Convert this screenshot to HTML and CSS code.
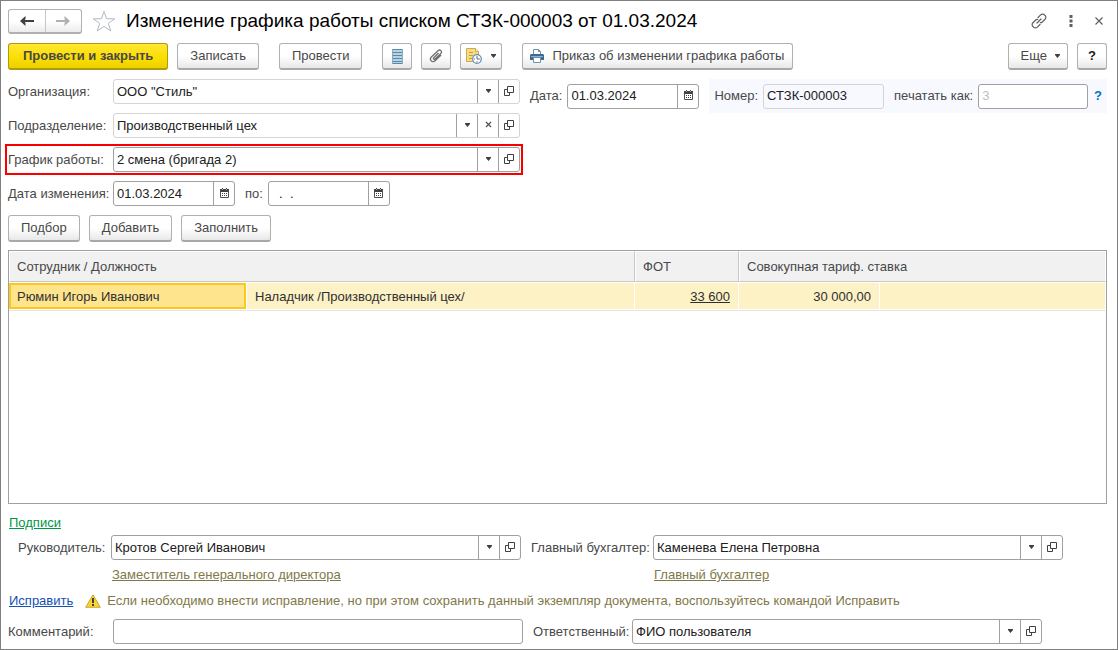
FILE: index.html
```html
<!DOCTYPE html>
<html lang="ru">
<head>
<meta charset="utf-8">
<title>Изменение графика работы списком</title>
<link rel="stylesheet" href="styles.css">
</head>
<body>
<svg class="sprite" aria-hidden="true">
  <symbol id="i-down" viewBox="0 0 7 4"><path d="M1 0h5v1H1zM1 1h5L3.500 4z" fill="#404040"/></symbol>
  <symbol id="i-open" viewBox="0 0 10 10"><path d="M3.500.5h6v6h-6zM3 3.500H.5v6h5V7" fill="none" stroke="#404040"/></symbol>
  <symbol id="i-clear" viewBox="0 0 7 7"><path d="M1 1l5 5M6 1L1 6" fill="none" stroke="#505050" stroke-width="1.200"/></symbol>
  <symbol id="i-cal" viewBox="0 0 9 10"><path d="M0 1h9v3H0zM2 0h1v1H2zM6 0h1v1H6z" fill="#404040"/><path d="M2 1h1v1H2zM6 1h1v1H6z" fill="#b0b0b0"/><path d="M.5 2v7.500h8V2" fill="none" stroke="#505050"/><path d="M2 5h1v1H2zM4 5h1v1H4zM6 5h1v1H6zM2 7h1v1H2zM4 7h1v1H4zM6 7h1v1H6z" fill="#404040"/></symbol>
</svg>
<main class="window">
  <header class="titlebar">
    <div class="nav">
      <button class="nav-btn" type="button" aria-label="Назад"><svg width="14" height="10" viewBox="0 0 14 10"><path d="M3 5h11" stroke="#404040" stroke-width="2"/><path d="M0 5L5.500 0v3L4 5l1.500 2v3z" fill="#404040"/></svg></button>
      <button class="nav-btn" type="button" aria-label="Вперед"><svg width="14" height="10" viewBox="0 0 14 10"><path d="M0 5h11" stroke="#b0b0b0" stroke-width="2"/><path d="M14 5L8.500 0v3L10 5 8.500 7v3z" fill="#b0b0b0"/></svg></button>
    </div>
    <button class="plain" type="button" aria-label="В избранное"><svg width="24" height="22" viewBox="0 0 24 22"><path d="M12 1.500l2.600 7.300h8.200l-6.500 4.700 2.500 7.500-6.800-4.600L5.200 21l2.500-7.500L1.200 8.800h8.200z" fill="#fff" stroke="#b0bac2" stroke-width="1"/></svg></button>
    <h1 class="title">Изменение графика работы списком СТЗК-000003 от 01.03.2024</h1>
    <div class="win-tools">
      <button class="plain" type="button" aria-label="Ссылка"><svg width="16" height="16" viewBox="0 0 16 16"><g fill="none" stroke="#606060" stroke-width="1.200" stroke-linecap="round"><path d="M7 4.500l2.700-2.700a2.600 2.600 0 0 1 3.700 0l.7.7a2.600 2.600 0 0 1 0 3.700l-2.800 2.800a2.600 2.600 0 0 1-2 .7"/><path d="M9 11.500l-2.700 2.700a2.600 2.600 0 0 1-3.700 0l-.7-.7a2.600 2.600 0 0 1 0-3.700l2.800-2.800a2.600 2.600 0 0 1 2-.7"/><path d="M6 10l4-4"/></g></svg></button>
      <button class="plain" type="button" aria-label="Меню"><svg width="4" height="12" viewBox="0 0 4 12"><path d="M.5 0h3v3h-3zM.5 4.500h3v3h-3zM.5 9h3v3h-3z" fill="#606060"/></svg></button>
      <button class="plain" type="button" aria-label="Закрыть"><svg width="8" height="8" viewBox="0 0 8 8"><path d="M.5.5l7 7M7.500.5l-7 7" stroke="#606060" stroke-width="1.200"/></svg></button>
    </div>
  </header>

  <div class="toolbar">
    <button class="btn btn-main" type="button">Провести и закрыть</button>
    <button class="btn" type="button">Записать</button>
    <button class="btn gap-before" type="button">Провести</button>
    <button class="btn btn-icon gap-before" type="button" aria-label="Список"><svg width="11" height="15" viewBox="0 0 11 15"><path d="M0 0h11v15H0z" fill="#b5d2e6"/><path d="M0 .5h11M0 3.500h11M0 6.500h11M0 9.500h11M0 12.500h11M0 14.500h11" stroke="#5d87a3"/><path d="M.5 0v15M10.500 0v15" stroke="#86abc4"/></svg></button>
    <button class="btn btn-icon" type="button" aria-label="Файлы"><svg width="14" height="14" viewBox="0 0 14 14"><path d="M9.500 4L4.800 8.700c-1 1 .3 2.300 1.300 1.300l5.700-5.500c2-2-.8-4.700-2.800-2.800L2.400 8c-2.600 2.600 1 6.400 3.700 3.800l6-5.800" fill="none" stroke="#707070" stroke-width="1.300"/></svg></button>
    <button class="btn btn-drop" type="button" aria-label="Создать на основании"><svg width="16" height="16" viewBox="0 0 16 16"><path d="M.5.5h9l3 3v10H.5z" fill="#f6dc83" stroke="#d2aa4a"/><path d="M9.500.5v3h3" fill="#fff3c8" stroke="#d2aa4a"/><path d="M3 4.500h4M3 7.500h4M3 10.500h3" stroke="#c79e45"/><circle cx="11" cy="11" r="4.300" fill="#fff" stroke="#5e8fba" stroke-width="1.200"/><path d="M11 8v3h2" fill="none" stroke="#3c6f9e"/><path d="M8 10.500h1v1H8zM13.200 10.500h1v1h-1zM10.500 13.200h1v1h-1z" fill="#d4453c"/></svg><svg width="7" height="4"><use href="#i-down"/></svg></button>
    <button class="btn btn-print" type="button"><svg width="14" height="14" viewBox="0 0 14 14"><path d="M3.500 5V.5h5l2 2V5" fill="#fff" stroke="#6f8faa"/><path d="M8.500.5v2h2" fill="none" stroke="#6f8faa"/><path d="M1 5h12l1 1v5H0V6z" fill="#3d6a92"/><path d="M1 7h12v1H1z" fill="#8db2d0"/><path d="M3.500 8.500h7v5h-7z" fill="#fff" stroke="#6f8faa"/></svg>Приказ об изменении графика работы</button>
    <button class="btn btn-more" type="button">Еще <svg width="7" height="4"><use href="#i-down"/></svg></button>
    <button class="btn btn-help" type="button">?</button>
  </div>

  <form class="form">
    <div class="head">
      <div class="col-left">
        <div class="row">
          <label class="label" for="org">Организация:</label>
          <div class="field soft grow"><input id="org" type="text" value='ООО "Стиль"'><button type="button" aria-label="Выбрать"><svg width="7" height="4"><use href="#i-down"/></svg></button><button type="button" aria-label="Открыть"><svg width="10" height="10"><use href="#i-open"/></svg></button></div>
        </div>
        <div class="row">
          <label class="label" for="dep">Подразделение:</label>
          <div class="field soft grow"><input id="dep" type="text" value="Производственный цех"><button type="button" aria-label="Выбрать"><svg width="7" height="4"><use href="#i-down"/></svg></button><button type="button" aria-label="Очистить"><svg width="7" height="7"><use href="#i-clear"/></svg></button><button type="button" aria-label="Открыть"><svg width="10" height="10"><use href="#i-open"/></svg></button></div>
        </div>
        <div class="row marked">
          <label class="label" for="sched">График работы:</label>
          <div class="field grow"><input id="sched" type="text" value="2 смена (бригада 2)"><button type="button" aria-label="Выбрать"><svg width="7" height="4"><use href="#i-down"/></svg></button><button type="button" aria-label="Открыть"><svg width="10" height="10"><use href="#i-open"/></svg></button></div>
        </div>
        <div class="row">
          <label class="label" for="from">Дата изменения:</label>
          <div class="field date"><input id="from" type="text" value="01.03.2024"><button type="button" aria-label="Календарь"><svg width="9" height="10"><use href="#i-cal"/></svg></button></div>
          <label class="label-to" for="to">по:</label>
          <div class="field date"><input id="to" type="text" value="  .  ."><button type="button" aria-label="Календарь"><svg width="9" height="10"><use href="#i-cal"/></svg></button></div>
        </div>
      </div>
      <div class="col-right">
        <div class="date-group">
          <label for="date">Дата:</label>
          <div class="field doc-date"><input id="date" type="text" value="01.03.2024"><button type="button" aria-label="Календарь"><svg width="9" height="10"><use href="#i-cal"/></svg></button></div>
        </div>
        <div class="num-group">
          <label for="num">Номер:</label>
          <div class="field soft num tinted"><input id="num" type="text" value="СТЗК-000003" readonly></div>
          <label class="print-label" for="printas">печатать как:</label>
          <div class="field print-as"><input id="printas" type="text" placeholder="3"></div>
          <a class="hint" href="#">?</a>
        </div>
      </div>
    </div>

    <div class="commands">
      <button class="btn" type="button">Подбор</button>
      <button class="btn" type="button">Добавить</button>
      <button class="btn" type="button">Заполнить</button>
    </div>

    <div class="grid-box">
      <table class="grid">
        <colgroup><col class="c-name"><col class="c-job"><col class="c-fot"><col class="c-rate"><col></colgroup>
        <thead><tr><th colspan="2">Сотрудник / Должность</th><th>ФОТ</th><th colspan="2">Совокупная тариф. ставка</th></tr></thead>
        <tbody><tr><td class="current">Рюмин Игорь Иванович</td><td>Наладчик /Производственный цех/</td><td class="num-cell"><a href="#">33 600</a></td><td class="num-cell">30 000,00</td><td></td></tr></tbody>
      </table>
    </div>

    <a class="signs" href="#">Подписи</a>
    <div class="signers">
      <label class="boss-label" for="boss">Руководитель:</label>
      <div class="signer">
        <div class="field"><input id="boss" type="text" value="Кротов Сергей Иванович"><button type="button" aria-label="Выбрать"><svg width="7" height="4"><use href="#i-down"/></svg></button><button type="button" aria-label="Открыть"><svg width="10" height="10"><use href="#i-open"/></svg></button></div>
        <a href="#">Заместитель генерального директора</a>
      </div>
      <label class="acc-label" for="acc">Главный бухгалтер:</label>
      <div class="signer">
        <div class="field"><input id="acc" type="text" value="Каменева Елена Петровна"><button type="button" aria-label="Выбрать"><svg width="7" height="4"><use href="#i-down"/></svg></button><button type="button" aria-label="Открыть"><svg width="10" height="10"><use href="#i-open"/></svg></button></div>
        <a href="#">Главный бухгалтер</a>
      </div>
    </div>

    <div class="fix">
      <a href="#">Исправить</a>
      <svg width="16" height="14" viewBox="0 0 16 14"><path d="M8 .8L15.300 13.300H.7z" fill="#f8d62e" stroke="#c9a63a" stroke-linejoin="round"/><path d="M7 4h2v5H7zM7 10h2v2H7z" fill="#404040"/></svg>
      <span>Если необходимо внести исправление, но при этом сохранить данный экземпляр документа, воспользуйтесь командой Исправить</span>
    </div>

    <div class="row footer">
      <label class="label" for="comment">Комментарий:</label>
      <div class="field comment"><input id="comment" type="text"></div>
      <label class="resp-label" for="resp">Ответственный:</label>
      <div class="field resp"><input id="resp" type="text" value="ФИО пользователя"><button type="button" aria-label="Выбрать"><svg width="7" height="4"><use href="#i-down"/></svg></button><button type="button" aria-label="Открыть"><svg width="10" height="10"><use href="#i-open"/></svg></button></div>
    </div>
  </form>
</main>
</body>
</html>
```
FILE: styles.css
```css
* { box-sizing: border-box; }
body {
  margin: 0;
  background: #fff;
  color: #484848;
  font: 13px/16px "Liberation Sans", Arial, sans-serif;
}
button, input { font: inherit; color: inherit; }
svg { display: block; flex: none; }
.sprite { position: absolute; width: 0; height: 0; }

.window {
  display: flex;
  flex-direction: column;
  min-height: 100vh;
  border: 1px solid #808080;
  padding: 8px 10px 5px 7px;
}

.titlebar { display: flex; align-items: center; height: 24px; }
.nav {
  display: flex;
  width: 74px;
  height: 25px;
  border: 1px solid #b0b0b0;
  border-bottom: 2px solid #b0b0b0;
  border-radius: 3px;
  background: linear-gradient(#fff 50%, #ececec);
}
.nav-btn {
  flex: 1;
  display: flex;
  align-items: center;
  justify-content: center;
  border: 0;
  padding: 0;
  background: none;
}
.nav-btn + .nav-btn { border-left: 1px solid #c8c8c8; }
.plain { border: 0; padding: 0; background: none; }
.titlebar > .plain { margin: 0 10px; }
.title { margin: 0; color: #000; font-size: 19px; line-height: 24px; font-weight: 400; }
.win-tools { display: flex; align-items: center; gap: 22px; margin-left: auto; padding-right: 4px; }

.toolbar { display: flex; gap: 9px; margin-top: 10px; }
.btn {
  display: flex;
  align-items: center;
  justify-content: center;
  height: 27px;
  padding: 0 12px;
  border: 1px solid #b0b0b0;
  border-bottom: 2px solid #a8a8a8;
  border-radius: 3px;
  background: linear-gradient(#fff 50%, #e8e8e8);
  white-space: nowrap;
}
.btn-main {
  padding: 0 14px;
  border-color: #b09a10;
  background: linear-gradient(#ffe833, #fbdd00 60%, #ecd000);
  font-weight: 700;
}
.gap-before { margin-left: 11px; }
.btn-icon { width: 30px; padding: 0; }
.btn-drop { gap: 8px; width: 42px; padding: 0; }
.btn-print { gap: 8px; margin-left: 11px; padding: 0 8px 0 7px; }
.btn-more { gap: 7px; margin-left: auto; padding-right: 6px; }
.btn-help { width: 30px; padding: 0; color: #202020; font-weight: 700; }

.form { display: flex; flex-direction: column; flex: 1; margin-top: 9px; }
.head { display: flex; gap: 10px; }
.col-left { display: flex; flex-direction: column; gap: 9px; flex: 0 1 512px; }
.row { display: flex; align-items: center; height: 25px; }
.label { flex: none; width: 105px; white-space: nowrap; }
.marked { outline: 2px solid #f80000; outline-offset: 1px; }
.label-to { padding: 0 5px 0 10px; }

.field {
  display: flex;
  height: 25px;
  border: 1px solid #a0a0a0;
  border-radius: 3px;
  background: #fff;
  color: #202020;
}
.field input {
  flex: 1;
  width: 0;
  min-width: 0;
  padding: 0 3px;
  border: 0;
  outline: 0;
  background: none;
}
.field input::placeholder { color: #c0c0c0; opacity: 1; }
.field button {
  display: flex;
  align-items: center;
  justify-content: center;
  width: 21px;
  padding: 0 0 2px;
  border: 0;
  border-left: 1px solid #a0a0a0;
  background: none;
}
.soft { border-color: #d4d4d4; }
.tinted { background: #f8f9ff; }
.grow { flex: 1; }
.date { width: 122px; }

.col-right { display: flex; flex: 1; gap: 10px; align-items: flex-start; }
.date-group { display: flex; align-items: center; gap: 5px; height: 34px; }
.doc-date { width: 132px; }
.num-group {
  display: flex;
  flex: 1;
  align-items: center;
  height: 34px;
  padding: 0 5px;
  background: #f8f9ff;
  white-space: nowrap;
}
.num { width: 121px; margin-left: 5px; }
.print-label { margin-left: 10px; }
.print-as { flex: 1; margin-left: 5px; }
.hint { margin-left: 6px; color: #0070c0; font-weight: 700; text-decoration: none; }

.commands { display: flex; gap: 9px; margin-top: 9px; }

.grid-box { flex: 1; margin-top: 8px; border: 1px solid #a0a0a0; }
.grid { width: 100%; border-collapse: separate; border-spacing: 0; table-layout: fixed; }
.c-name { width: 238px; }
.c-job { width: 388px; }
.c-fot { width: 104px; }
.c-rate { width: 141px; }
.grid th {
  height: 31px;
  padding: 0 7px;
  border: 1px solid #fff;
  border-right-color: #c8c8c8;
  border-bottom-color: #c8c8c8;
  background: #f1f1f1;
  font-weight: 400;
  text-align: left;
}
.grid th:last-child { border-right-color: #fff; }
.grid td {
  height: 29px;
  padding: 0 8px;
  border-top: 1px solid #fff;
  border-right: 1px solid #fff;
  border-bottom: 1px solid #e4e4e4;
  background: #fdf1c6;
  box-shadow: inset 0 -1px #fff;
  color: #303030;
}
.grid td.current {
  background: #ffe48e;
  box-shadow: inset 0 -1px #fff, inset 0 -3px #fac81e, inset 0 0 0 2px #fac81e;
}
.grid td.num-cell { text-align: right; }
.grid td a { color: inherit; }

.signs { align-self: flex-start; margin: 11px 0 4px 1px; color: #009646; }
.signers { display: flex; padding-left: 10px; }
.signers label { flex: none; line-height: 25px; white-space: nowrap; }
.boss-label { width: 93px; }
.acc-label { width: 122px; }
.signer { display: flex; flex-direction: column; flex: 0 1 410px; align-items: flex-start; gap: 7px; }
.signer .field { width: 100%; }
.signer + label { margin-left: 10px; }
.signer a { margin-left: 1px; color: #807848; }

.fix { display: flex; align-items: center; margin: 10px 0 10px 1px; color: #807848; }
.fix a { color: #1450b4; }
.fix svg { margin: 0 6px 0 12px; }

.comment { flex: 0 1 410px; }
.resp-label { flex: none; width: 99px; margin-left: 10px; white-space: nowrap; }
.resp { flex: 0 1 410px; }
```
